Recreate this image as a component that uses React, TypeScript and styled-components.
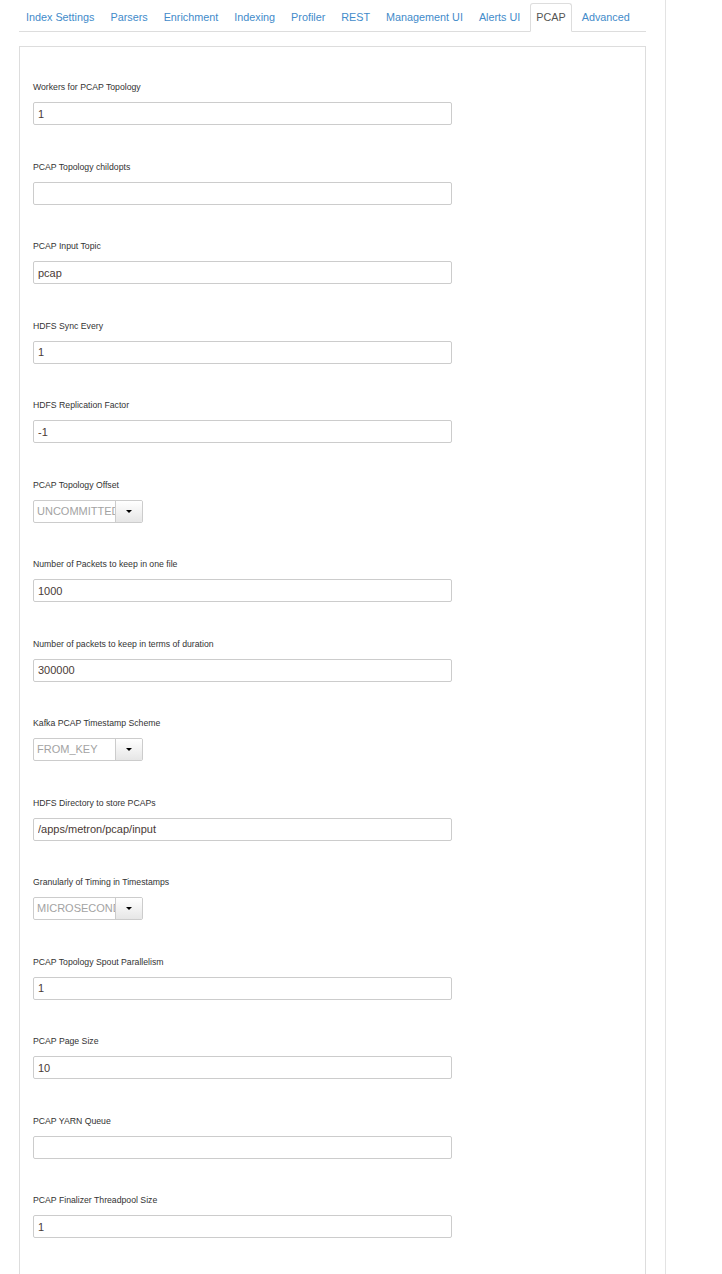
import styled, { createGlobalStyle } from "styled-components";

const GlobalStyle = createGlobalStyle`
  html, body {
    margin: 0;
    padding: 0;
    background: #fff;
    font-family: "Liberation Sans", Arial, Helvetica, sans-serif;
  }
`;

interface Field {
  label: string;
  value: string;
  kind?: "select";
}

const tabs = [
  "Index Settings",
  "Parsers",
  "Enrichment",
  "Indexing",
  "Profiler",
  "REST",
  "Management UI",
  "Alerts UI",
  "PCAP",
  "Advanced",
];

const fields: Field[] = [
  { label: "Workers for PCAP Topology", value: "1" },
  { label: "PCAP Topology childopts", value: "" },
  { label: "PCAP Input Topic", value: "pcap" },
  { label: "HDFS Sync Every", value: "1" },
  { label: "HDFS Replication Factor", value: "-1" },
  { label: "PCAP Topology Offset", value: "UNCOMMITTED_EARLIEST", kind: "select" },
  { label: "Number of Packets to keep in one file", value: "1000" },
  { label: "Number of packets to keep in terms of duration", value: "300000" },
  { label: "Kafka PCAP Timestamp Scheme", value: "FROM_KEY", kind: "select" },
  { label: "HDFS Directory to store PCAPs", value: "/apps/metron/pcap/input" },
  { label: "Granularly of Timing in Timestamps", value: "MICROSECONDS", kind: "select" },
  { label: "PCAP Topology Spout Parallelism", value: "1" },
  { label: "PCAP Page Size", value: "10" },
  { label: "PCAP YARN Queue", value: "" },
  { label: "PCAP Finalizer Threadpool Size", value: "1" },
];

const Page = styled.div`
  display: flex;
  min-height: 100vh;
`;

const Main = styled.div`
  width: 627px;
  padding: 3px 19px 0;
  flex-shrink: 0;
`;

const Side = styled.div`
  flex: 1;
  border-left: 1px solid #e3e3e3;
`;

const Nav = styled.ul`
  display: flex;
  margin: 0;
  padding: 0 0 0 1px;
  list-style: none;
  border-bottom: 1px solid #ddd;
`;

const Tab = styled.li<{ $active?: boolean }>`
  flex-shrink: 0;
  white-space: nowrap;
  margin: 0 4px -1px 0;
  padding: 0 5px;
  line-height: 27px;
  font-size: 10.8px;
  border: 1px solid ${(p) => (p.$active ? "#ddd" : "transparent")};
  border-bottom-color: ${(p) => (p.$active ? "#fff" : "transparent")};
  border-radius: 3px 3px 0 0;
  background: ${(p) => (p.$active ? "#fff" : "transparent")};
  color: ${(p) => (p.$active ? "#555" : "#428bca")};
  cursor: pointer;
`;

const Panel = styled.div`
  margin-top: 14px;
  border: 1px solid #ddd;
  border-bottom: none;
  padding: 34px 13px 60px;
`;

const Group = styled.div`
  margin-bottom: 35.5px;
`;

const Label = styled.label`
  display: block;
  font-size: 8.7px;
  line-height: 12px;
  color: #333;
  margin-bottom: 9px;
`;

const TextInput = styled.input`
  display: block;
  box-sizing: border-box;
  width: 419px;
  height: 23px;
  margin: 0;
  padding: 0 4px;
  border: 1px solid #ccc;
  border-radius: 2px;
  font-family: inherit;
  font-size: 11px;
  color: #4a3a36;
  background: #fff;
  outline: none;
`;

const Select = styled.div`
  display: flex;
  width: 110px;
  height: 23px;
  box-sizing: border-box;
  border: 1px solid #ccc;
  border-radius: 2px;
  overflow: hidden;
`;

const SelectValue = styled.span`
  width: 75px;
  flex-shrink: 0;
  padding: 0 3px;
  line-height: 21px;
  font-size: 11px;
  color: #a3a3a3;
  white-space: nowrap;
  overflow: hidden;
  border-right: 1px solid #ccc;
`;

const SelectButton = styled.span`
  flex: 1;
  display: flex;
  align-items: center;
  justify-content: center;
  background: linear-gradient(#fff, #e6e6e6);
`;

const Caret = styled.span`
  width: 0;
  height: 0;
  border-left: 3.5px solid transparent;
  border-right: 3.5px solid transparent;
  border-top: 3.5px solid #000;
`;

export default function App() {
  return (
    <Page>
      <GlobalStyle />
      <Main>
        <Nav>
          {tabs.map((t) => (
            <Tab key={t} $active={t === "PCAP"}>
              {t}
            </Tab>
          ))}
        </Nav>
        <Panel>
          {fields.map((f) => (
            <Group key={f.label}>
              <Label>{f.label}</Label>
              {f.kind === "select" ? (
                <Select>
                  <SelectValue>{f.value}</SelectValue>
                  <SelectButton>
                    <Caret />
                  </SelectButton>
                </Select>
              ) : (
                <TextInput defaultValue={f.value} />
              )}
            </Group>
          ))}
        </Panel>
      </Main>
      <Side />
    </Page>
  );
}
